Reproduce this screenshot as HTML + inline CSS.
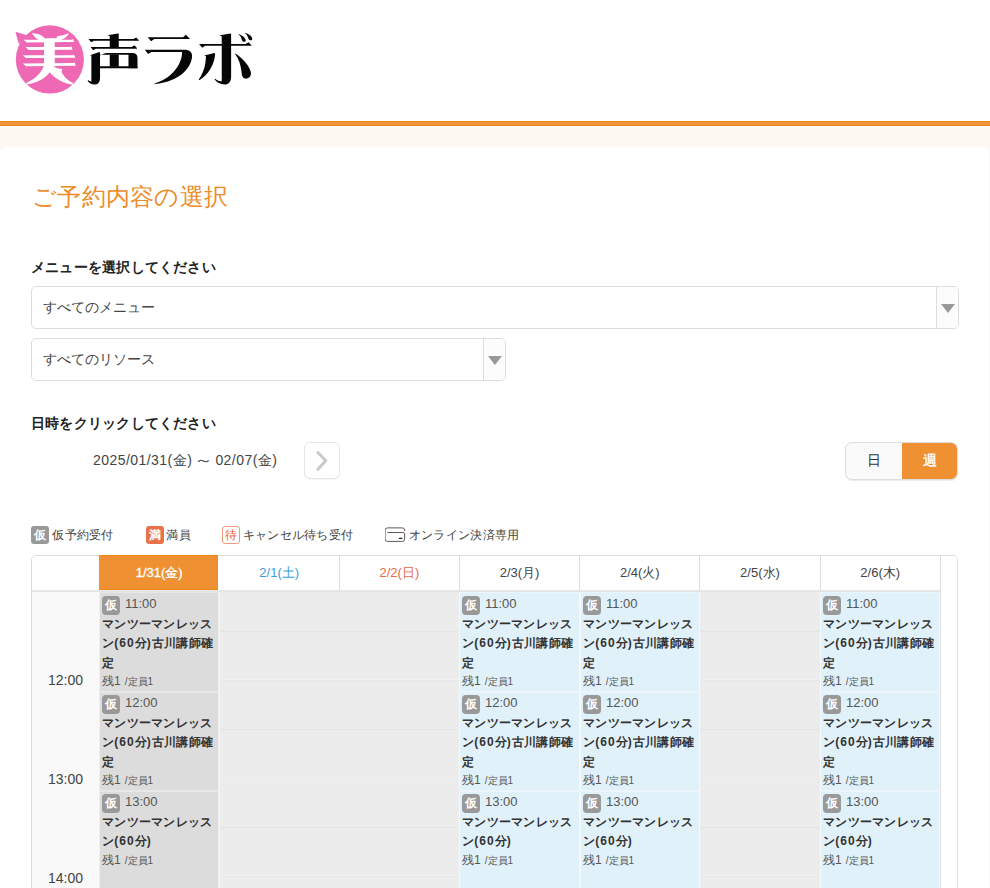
<!DOCTYPE html>
<html lang="ja"><head><meta charset="utf-8"><title>ご予約内容の選択</title>
<style>
*{box-sizing:border-box}
html,body{margin:0;padding:0}
body{width:990px;height:888px;overflow:hidden;position:relative;background:#fff;font-family:"Liberation Sans",sans-serif;color:#333;font-size:14px}
.abs,.logo,.bar,.peach,.card,h1,h2,.sel,.nav,.range,.tg,.lg,.cal,.dh,.ev,.hl,.tl,.tcol,.gut,.hdr{position:absolute}
.logo{left:0;top:0}
.bar{left:0;top:121px;width:990px;height:5px;background:linear-gradient(#ee8710 0,#ee8710 1px,#f0953f 1px,#f0953f 4px,#ee8710 4px)}
.peach{left:0;top:128px;width:990px;height:760px;background:#fef8f2}
.card{left:0;top:147px;width:989px;height:760px;background:#fff;border-radius:5px 5px 0 0}
h1{margin:0;left:32px;top:179px;font-size:24px;letter-spacing:.3px;line-height:36px;font-weight:normal;color:#ee8c2a;white-space:nowrap}
h2{margin:0;left:31px;letter-spacing:.22px;font-size:14px;line-height:20px;font-weight:bold;color:#222;white-space:nowrap}
.sel{height:43px;border:1px solid #ddd;border-radius:5px;background:#fff;line-height:41px;padding-left:11px;font-size:14px;color:#444;overflow:hidden;white-space:nowrap}
.sel i{position:absolute;right:0;top:0;width:22px;height:41px;border-left:1px solid #ddd;background:#fcfcfc}
.sel i:after{content:"";position:absolute;left:3.6px;top:17.3px;border-left:7px solid transparent;border-right:7px solid transparent;border-top:9.2px solid #999}
.range{left:93px;top:450px;font-size:14px;line-height:20px;color:#444;white-space:nowrap;letter-spacing:.45px}
.nav{left:304px;top:442px;width:36px;height:36.5px;border:1px solid #e6e6e6;border-radius:6px;background:#fff;box-shadow:0 1px 1px rgba(0,0,0,.04)}
.tg{left:845px;top:442px;width:113px;height:38px;border-radius:7px;border:1px solid #ddd;background:#fafafa;box-shadow:0 1px 1px rgba(0,0,0,.08);overflow:hidden}
.tg span{position:absolute;top:0;height:36px;line-height:35px;text-align:center;font-size:14px;color:#333}
.tg .a{left:0;width:56px}
.tg .b{left:56px;width:56px;background:#ef9033;color:#fff;-webkit-text-stroke:.4px #fff}
.lg{top:526px;height:18px;line-height:18px;letter-spacing:.27px;font-size:12px;color:#444;white-space:nowrap}
.bd{display:inline-block;width:18px;height:18px;line-height:18px;border-radius:3px;text-align:center;font-size:12px;font-weight:bold;color:#fff;vertical-align:top}
.bd.g{background:#999}
.bd.r{background:#e9724b}
.bd.w{background:#fff;border:1px solid #ee9a80;color:#e9613a;line-height:16px;font-weight:normal}
.cal{left:31px;top:555px;width:927px;height:400px;border:1px solid #ddd;border-radius:5px 5px 0 0;background:#fff}
.hdr{left:32px;top:590px;width:925px;height:2px;background:linear-gradient(#e9e9e9 50%,#e3e3e3 50%)}
.dh{top:556px;height:34.5px;line-height:34px;text-align:center;font-size:13px;color:#444;border-right:1px solid #ddd;white-space:nowrap}
.dh.today{background:#ef9033;color:#fff;-webkit-text-stroke:.35px #fff;border-right:none;left:99px!important;width:119.4px!important;top:555px;height:35.4px;line-height:33px;border-top:1px solid #ee8712;border-bottom:1px solid #ee8712;padding-left:1px}
.dh.sat{color:#3b9ddd}
.dh.sun{color:#ea6a4a}
.tcol{left:32px;top:591px;width:67px;height:300px;background:#f9f9f9}
.grid{position:absolute;left:98.8px;top:591px;width:841.4px;height:300px;background:#ececec}
.hl{left:98.8px;width:841.4px;height:1px}
.hl.d{background:#e4e4e4}
.hl.l{background:#f1f1f1}
.hl.m{background:#e8e8e8}
.vl{position:absolute;top:591px;width:1.6px;height:300px;background:#f4f4f4}
.tl{left:32px;width:67px;text-align:center;font-size:14px;line-height:20px;color:#444}
.gut{left:940.2px;top:556px;width:16.8px;height:340px;background:#fff;border-left:1px solid #ddd;border-radius:0 4px 0 0}
.ev{overflow:hidden;padding:0 1.6px 0 2px;border:1px solid;font-size:12px;line-height:19.5px;color:#555}
.ev.gr{background:#dcdcdc;border-color:#e7e7e7 #efefef}
.ev.bl{background:#e1f1fa;border-color:#ebf5fb #f3f9fc}
.ev .l1{height:19.5px;white-space:nowrap}
.ev .bd{width:18px;height:19px;line-height:19px;border-radius:4px;margin-top:2px}
.ev .tm{font-size:13px;margin-left:5px}
.ev .tt{font-weight:bold;color:#333;white-space:nowrap;font-size:12px;letter-spacing:.25px;position:relative;top:1.3px}
.ev .tt i{font-style:normal;letter-spacing:1px}
.ev .rm small{font-size:10px;margin-left:.8px}
</style></head><body>
<svg class="logo" width="270" height="110" viewBox="0 0 270 110">
<g transform="translate(10 20) scale(0.09009)">
<circle cx="442.5" cy="437.5" r="378" fill="#ee68b4"/>
<path d="M60 130L195 172L98 268Z" fill="#ee68b4"/>
<g fill="#fff">
<path d="M150 218L688 218L697 207L714 245L186 250Z"/>
<path d="M172 300L670 300L679 290L694 329L206 333Z"/>
<path d="M142 392L700 390L708 380L725 419L176 423Z"/>
<path d="M142 482L706 478L714 468L731 509L178 514Z"/>
<path d="M243 147C310 147 366 172 388 206L388 250C334 240 280 206 243 147Z"/>
<path d="M657 145C640 182 602 212 560 224L498 224L498 202L520 200L520 180C562 176 612 166 657 145Z"/>
<path d="M378 205L497 200L497 500C492 550 470 585 441 580C400 642 300 702 186 716L178 701C270 660 352 590 378 500Z"/>
<path d="M470 515C500 528 540 540 580 545L572 577C600 632 650 680 703 700L692 719C600 706 500 652 438 578Z"/>
</g></g>
<g transform="translate(82 26) scale(0.072072)" fill="#060606">
<path d="M385 300L385 140L352 128L500 103L510 110L510 300Z"/>
<path d="M90 182L715 182L752 158L792 200L790 206L165 206L128 226Z"/>
<path d="M120 292L690 292L727 268L765 310L762 316L190 316L155 336Z"/>
<path d="M130 405L100 408L240 362L250 370L250 720C250 780 220 812 170 812C130 812 95 790 78 758L88 750C100 765 115 772 130 770Z"/>
<path d="M245 412C270 395 310 378 350 376L700 374C745 374 770 395 770 440L770 585L645 585L645 400L250 400Z"/>
<path d="M250 560L770 560L770 585L250 585Z"/>
<path d="M385 395L510 395L510 565L385 565Z"/>
</g>
<g transform="translate(138 26) scale(0.072072)" fill="#060606">
<path d="M135 155L625 155L665 122L722 182L225 182L182 210Z"/>
<path d="M95 328L640 328C720 328 752 360 750 420C745 560 600 770 232 806L228 798C440 740 610 560 612 362L185 362L140 390Z"/>
</g>
<g transform="translate(194 26) scale(0.072072)" fill="#060606">
<path d="M385 145L355 130L505 103L515 110L515 700C515 775 480 812 425 812C365 812 315 785 285 740L295 732C320 760 350 770 385 765Z"/>
<path d="M70 250L715 250L757 227L802 275L155 275L115 302Z"/>
<path d="M140 410L285 373L293 380C290 520 200 680 72 752L66 742C130 650 165 540 165 415Z"/>
<path d="M575 380C680 450 780 560 790 650C795 700 760 735 715 730C675 725 665 690 660 640C650 540 620 450 570 388Z"/>
<path d="M620 112C670 130 710 160 718 195C720 215 700 225 685 218C665 210 665 190 655 165C648 145 635 128 618 118Z"/>
<path d="M705 95C760 110 800 140 808 172C812 192 795 203 778 198C758 192 755 170 745 148C737 128 722 110 703 102Z"/>
</g>
</svg>
<div class="bar"></div>
<div class="peach"></div>
<div class="card"></div>
<h1>ご予約内容の選択</h1>
<h2 style="top:257px">メニューを選択してください</h2>
<div class="sel" style="left:31px;top:286px;width:928px">すべてのメニュー<i></i></div>
<div class="sel" style="left:31px;top:338px;width:475px">すべてのリソース<i></i></div>
<h2 style="top:413px">日時をクリックしてください</h2>
<div class="range">2025/01/31(金) <span style="display:inline-block;transform:scaleX(1.35)">～</span> 02/07(金)</div>
<div class="nav"><svg width="34" height="34" viewBox="0 0 34 34" style="position:absolute;left:0;top:0"><path d="M12.9 9.5 L20.8 17.8 L12.9 26.3" fill="none" stroke="#c9c9c9" stroke-width="3" stroke-linecap="round" stroke-linejoin="round"/></svg></div>
<div class="tg"><span class="a">日</span><span class="b">週</span></div>
<div class="lg" style="left:31px"><span class="bd g">仮</span><span style="margin-left:3.3px">仮予約受付</span></div>
<div class="lg" style="left:146px"><span class="bd r">満</span><span style="margin-left:2.4px">満員</span></div>
<div class="lg" style="left:222px"><span class="bd w">待</span><span style="margin-left:2.8px">キャンセル待ち受付</span></div>
<div class="lg" style="left:385px"><svg width="22" height="17" viewBox="0 0 22 17" style="vertical-align:top;margin-top:1px;margin-right:-1.7px"><g transform="translate(-7 -7) scale(0.040404)"><path d="M660 265L660 250Q660 195 600 195L235 195Q175 195 175 255L175 470Q175 530 235 530L600 530Q660 530 660 470L660 345Q660 310 620 310L240 310" fill="none" stroke="#555" stroke-width="24" stroke-linecap="round"/><rect x="515" y="440" width="90" height="32" rx="16" fill="#222"/></g></svg> オンライン決済専用</div>
<div class="cal"></div>
<div class="tcol"></div>
<div class="grid"></div>
<div class="hl d" style="top:631px"></div><div class="hl l" style="top:679px"></div><div class="hl m" style="top:680px"></div><div class="hl d" style="top:729px"></div><div class="hl l" style="top:777px"></div><div class="hl m" style="top:778px"></div><div class="hl d" style="top:827px"></div><div class="hl l" style="top:875px"></div><div class="hl m" style="top:876px"></div>
<div class="vl" style="left:219px;width:1px"></div>
<div class="dh today" style="left:99.4px;width:120.2px">1/31(金)</div>
<div class="dh sat" style="left:219.6px;width:120.2px">2/1(土)</div>
<div class="dh sun" style="left:339.8px;width:120.2px">2/2(日)</div>
<div class="dh " style="left:460.0px;width:120.2px">2/3(月)</div>
<div class="dh " style="left:580.2px;width:120.2px">2/4(火)</div>
<div class="dh " style="left:700.4px;width:120.2px">2/5(水)</div>
<div class="dh " style="left:820.6px;width:120.2px">2/6(木)</div>

<div class="hdr"></div>
<div class="tl" style="top:670.4px">12:00</div><div class="tl" style="top:769.4px">13:00</div><div class="tl" style="top:868.4px">14:00</div>
<div class="ev gr" style="left:99px;top:592px;width:120px;height:100px"><div class="l1" style="margin-top:0.8px"><span class="bd g">仮</span><span class="tm">11:00</span></div><div class="tt">マンツーマンレッス<br>ン<i>(60</i>分<i>)</i>古川講師確<br>定</div><div class="rm">残1 <small>/定員1</small></div></div>
<div class="ev gr" style="left:99px;top:692px;width:120px;height:99px"><div class="l1" style="margin-top:0px"><span class="bd g">仮</span><span class="tm">12:00</span></div><div class="tt">マンツーマンレッス<br>ン<i>(60</i>分<i>)</i>古川講師確<br>定</div><div class="rm">残1 <small>/定員1</small></div></div>
<div class="ev gr" style="left:99px;top:791px;width:120px;height:110px"><div class="l1" style="margin-top:0px"><span class="bd g">仮</span><span class="tm">13:00</span></div><div class="tt">マンツーマンレッス<br>ン<i>(60</i>分<i>)</i></div><div class="rm">残1 <small>/定員1</small></div></div>
<div class="ev bl" style="left:459px;top:592px;width:121px;height:100px"><div class="l1" style="margin-top:0.8px"><span class="bd g">仮</span><span class="tm">11:00</span></div><div class="tt">マンツーマンレッス<br>ン<i>(60</i>分<i>)</i>古川講師確<br>定</div><div class="rm">残1 <small>/定員1</small></div></div>
<div class="ev bl" style="left:459px;top:692px;width:121px;height:99px"><div class="l1" style="margin-top:0px"><span class="bd g">仮</span><span class="tm">12:00</span></div><div class="tt">マンツーマンレッス<br>ン<i>(60</i>分<i>)</i>古川講師確<br>定</div><div class="rm">残1 <small>/定員1</small></div></div>
<div class="ev bl" style="left:459px;top:791px;width:121px;height:110px"><div class="l1" style="margin-top:0px"><span class="bd g">仮</span><span class="tm">13:00</span></div><div class="tt">マンツーマンレッス<br>ン<i>(60</i>分<i>)</i></div><div class="rm">残1 <small>/定員1</small></div></div>
<div class="ev bl" style="left:580px;top:592px;width:120px;height:100px"><div class="l1" style="margin-top:0.8px"><span class="bd g">仮</span><span class="tm">11:00</span></div><div class="tt">マンツーマンレッス<br>ン<i>(60</i>分<i>)</i>古川講師確<br>定</div><div class="rm">残1 <small>/定員1</small></div></div>
<div class="ev bl" style="left:580px;top:692px;width:120px;height:99px"><div class="l1" style="margin-top:0px"><span class="bd g">仮</span><span class="tm">12:00</span></div><div class="tt">マンツーマンレッス<br>ン<i>(60</i>分<i>)</i>古川講師確<br>定</div><div class="rm">残1 <small>/定員1</small></div></div>
<div class="ev bl" style="left:580px;top:791px;width:120px;height:110px"><div class="l1" style="margin-top:0px"><span class="bd g">仮</span><span class="tm">13:00</span></div><div class="tt">マンツーマンレッス<br>ン<i>(60</i>分<i>)</i></div><div class="rm">残1 <small>/定員1</small></div></div>
<div class="ev bl" style="left:820px;top:592px;width:120px;height:100px"><div class="l1" style="margin-top:0.8px"><span class="bd g">仮</span><span class="tm">11:00</span></div><div class="tt">マンツーマンレッス<br>ン<i>(60</i>分<i>)</i>古川講師確<br>定</div><div class="rm">残1 <small>/定員1</small></div></div>
<div class="ev bl" style="left:820px;top:692px;width:120px;height:99px"><div class="l1" style="margin-top:0px"><span class="bd g">仮</span><span class="tm">12:00</span></div><div class="tt">マンツーマンレッス<br>ン<i>(60</i>分<i>)</i>古川講師確<br>定</div><div class="rm">残1 <small>/定員1</small></div></div>
<div class="ev bl" style="left:820px;top:791px;width:120px;height:110px"><div class="l1" style="margin-top:0px"><span class="bd g">仮</span><span class="tm">13:00</span></div><div class="tt">マンツーマンレッス<br>ン<i>(60</i>分<i>)</i></div><div class="rm">残1 <small>/定員1</small></div></div>

<div class="gut"></div>
</body></html>
